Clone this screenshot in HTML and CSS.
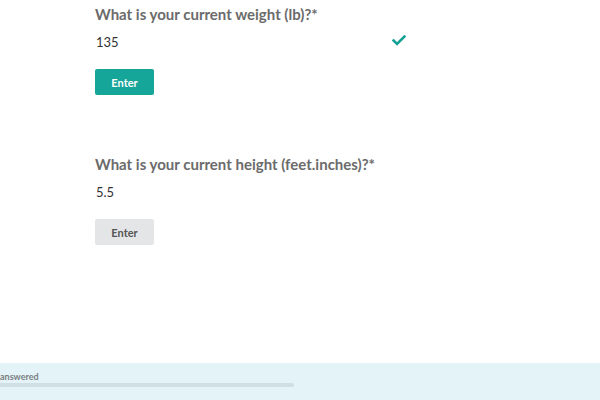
FILE: index.html
```html
<!DOCTYPE html>
<html>
<head>
<meta charset="utf-8">
<link rel="stylesheet" href="styles.css">
</head>
<body>
<div class="page">
  <main class="form">
    <section class="question">
      <h2 class="q-title">What is your current weight (lb)?*</h2>
      <div class="field">
        <span class="value">135</span>
        <svg class="check" width="14" height="11" viewBox="0 0 14 11"><path d="M1.5 5.5 L5 9 L12.5 1.5" fill="none" stroke="#16a195" stroke-width="2.6" stroke-linecap="square"/></svg>
      </div>
      <button class="btn btn-active">Enter</button>
    </section>
    <section class="question second">
      <h2 class="q-title">What is your current height (feet.inches)?*</h2>
      <div class="field">
        <span class="value">5.5</span>
      </div>
      <button class="btn btn-disabled">Enter</button>
    </section>
  </main>
  <footer class="footer">
    <div class="progress-label">answered</div>
    <div class="progress-track"></div>
  </footer>
</div>
</body>
</html>
```
FILE: styles.css
```css
html, body {
  margin: 0;
  padding: 0;
  background: #ffffff;
  font-family: Lato, "Liberation Sans", sans-serif;
}
.page {
  height: 400px;
  display: flex;
  flex-direction: column;
  overflow: hidden;
}
.form {
  flex: 1;
  padding-left: 95px;
  width: 311px;
}
.question {
  display: flex;
  flex-direction: column;
  align-items: flex-start;
}
.second {
  margin-top: 55px;
}
.q-title {
  margin: 4px 0 0 0;
  font-size: 15px;
  line-height: 20px;
  font-weight: 700;
  color: #6b6b6b;
  white-space: nowrap;
}
.field {
  margin-top: 10px;
  width: 100%;
  height: 16px;
  display: flex;
  align-items: flex-start;
  justify-content: space-between;
}
.value {
  font-size: 13px;
  line-height: 16px;
  color: #333333;
  padding-left: 1px;
}
.check {
  margin-top: 1px;
}
.btn {
  margin-top: 19px;
  width: 59px;
  height: 26px;
  border: none;
  border-radius: 2px;
  font-family: Lato, "Liberation Sans", sans-serif;
  font-size: 11px;
  font-weight: 700;
  padding: 0;
}
.btn-active {
  background: #16a599;
  color: #ffffff;
}
.btn-disabled {
  background: #e4e5e7;
  color: #555555;
}
.footer {
  height: 37px;
  background: #e4f3f7;
  padding-top: 9px;
  box-sizing: border-box;
}
.progress-label {
  font-size: 9px;
  font-weight: 700;
  color: #7a7f82;
  line-height: 10px;
}
.progress-track {
  margin-top: 1px;
  width: 294px;
  height: 4px;
  border-radius: 0 2px 2px 0;
  background: #cfdfe4;
}
```
